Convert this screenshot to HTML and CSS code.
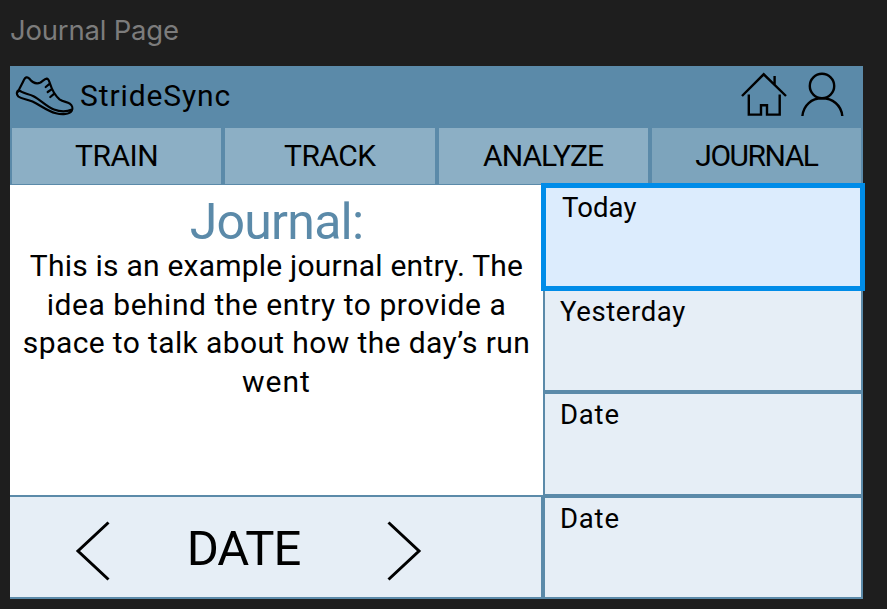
FILE: index.html
```html
<!DOCTYPE html>
<html lang="en">
<head>
<meta charset="utf-8">
<title>StrideSync Journal</title>
<link rel="stylesheet" href="styles.css">
</head>
<body>
<div class="frame-name"><span>Journal Page</span></div>
<main class="frame">
  <header class="header">
    <svg class="shoe" width="62" height="44" viewBox="14 74 62 44">
      <path d="M18.3 91.5C20 87 22.500 83.500 23.800 80.200C25 77.200 27.300 76.300 29.200 78.500C33 83.300 37 84.200 40.500 82.500C43 80.800 44.700 78.800 46.700 78.600C48.500 78.500 49 80.500 49.800 83C51.500 88.500 54.500 95 59.500 99.300C63.500 102.300 66.800 101.500 69.800 103.700C72.300 105.500 73 108.500 71.800 110.700C69.500 114.500 62 114.900 56 113.300C47 111 40 105 32.500 101.500C27 99 21.500 99 18.300 96.500C16.300 94.500 16.200 91.500 18.800 90C23 94 28.500 93.500 33.500 96.200C41 100.200 46.500 106.600 54 109.500C60 111.800 66.500 111.900 72 109.600M45.700 87L49.200 84.200M47.700 92L51.500 89.300M50.300 97L54 93.800"/>
    </svg>
    <span class="brand">StrideSync</span>
    <svg class="home" width="48" height="46" viewBox="740 72 48 46">
      <path d="M742 96L763.700 74.300L786 96M774.600 76V84.500M748.800 94.500V114.600H761V105.300H767V114.600H779.700V94.500"/>
    </svg>
    <svg class="user" width="44" height="46" viewBox="800 71 44 46">
      <circle cx="822" cy="85" r="12.200"/>
      <path d="M802.400 115C803.500 104 811.500 97.300 822 97.300S841.200 104 842.300 115"/>
    </svg>
  </header>
  <nav class="tabs">
    <a class="tab train"><span>TRAIN</span></a>
    <a class="tab track"><span>TRACK</span></a>
    <a class="tab analyze"><span>ANALYZE</span></a>
    <a class="tab current"><span>JOURNAL</span></a>
  </nav>
  <div class="content">
    <section class="journal">
      <article class="entry">
        <h1>Journal:</h1>
        <p><span class="l1">This is an example journal entry. The</span><br><span class="l2">idea behind the entry to provide a</span><br><span class="l3">space to talk about how the day’s run</span><br><span class="l4">went</span></p>
      </article>
      <footer class="pager">
        <svg width="36" height="60" viewBox="0 0 36 60"><path d="M34.500 1.500L4 30L34.500 58.500"/></svg>
        <span class="date">DATE</span>
        <svg width="36" height="60" viewBox="0 0 36 60"><path d="M1.500 1.500L32 30L1.500 58.500"/></svg>
      </footer>
    </section>
    <aside class="days">
      <div class="day selected"><span class="today">Today</span></div>
      <div class="day"><span class="yesterday">Yesterday</span></div>
      <div class="day"><span>Date</span></div>
      <div class="day"><span>Date</span></div>
    </aside>
  </div>
</main>
</body>
</html>
```
FILE: styles.css
```css
* { box-sizing: border-box; }
body {
  margin: 0;
  height: 609px;
  overflow: hidden;
  background: #1e1e1e;
  color: #000;
  font-family: Roboto, sans-serif;
}
svg { display: block; flex: none; fill: none; stroke: #000; stroke-width: 2.200; stroke-linecap: round; stroke-linejoin: round; }
.frame-name {
  height: 66px;
  padding: 13px 0 0 10px;
  font: 400 27.500px/34px Inter, sans-serif;
  letter-spacing: -.200px;
  color: #7c7c7c;
}
.frame { width: 853px; height: 533px; margin-left: 10px; background: #5b8aa9; }
.header { height: 61.500px; display: flex; align-items: flex-start; padding: 0 19px 0 4px; }
.shoe { margin-top: 8px; }
.brand { margin: 10px 0 0 4px; font-size: 30px; line-height: 40px; letter-spacing: .9px; white-space: nowrap; }
.home { margin: 6px 12px 0 auto; }
.user { margin-top: 5.500px; }
.home, .user { stroke-width: 2.400; stroke-linecap: butt; stroke-linejoin: miter; }
.tabs { display: grid; grid-template-columns: repeat(4, 1fr); gap: 4px; height: 57.500px; padding: 0 2px 2px; }
.tab { background: #8cafc5; font-size: 30px; line-height: 56px; text-align: center; letter-spacing: -.5px; }
.tab.analyze { letter-spacing: -.9px; }
.tab.current { background: #7da4bc; letter-spacing: -1.500px; }
.content { display: flex; height: 414px; }
.journal { width: 533px; flex: none; }
.entry { height: 310px; background: #fff; text-align: center; padding-top: 12px; }
h1 { margin: 0; font-size: 50px; line-height: 50px; font-weight: 400; color: #5b8aa9; letter-spacing: -.750px; }
p { margin: 0; font-size: 30px; line-height: 38.500px; white-space: nowrap; }
.l1 { letter-spacing: .220px; }
.l2 { letter-spacing: .530px; }
.l3 { letter-spacing: .380px; }
.l4 { letter-spacing: 1px; }
.pager { height: 102px; margin-top: 2px; border-right: 2px solid #5b8aa9; border-bottom: 2px solid #5b8aa9; background: #e6eef6; display: flex; align-items: center; padding: 7px 0 0 64px; }
.pager svg { stroke-width: 3; stroke-linecap: butt; stroke-linejoin: miter; }
.date { width: 277px; padding-right: 10px; text-align: center; font-size: 49px; line-height: 60px; letter-spacing: -1px; transform: translateY(-2px); }
.days { flex: 1; display: grid; grid-template-rows: 102px 99px 100px 99px; row-gap: 4px; padding: 0 2px 2px; }
.day { background: #e6eef6; font-size: 27.500px; line-height: 32px; padding: 4.500px 0 0 15px; letter-spacing: .8px; }
.yesterday { letter-spacing: .6px; }
.day.selected { position: relative; z-index: 1; margin: -2px -4px 0; height: 108px; border: 5px solid #008ce8; background: #dcecfd; padding: 4px 0 0 16px; letter-spacing: .1px; }
```
